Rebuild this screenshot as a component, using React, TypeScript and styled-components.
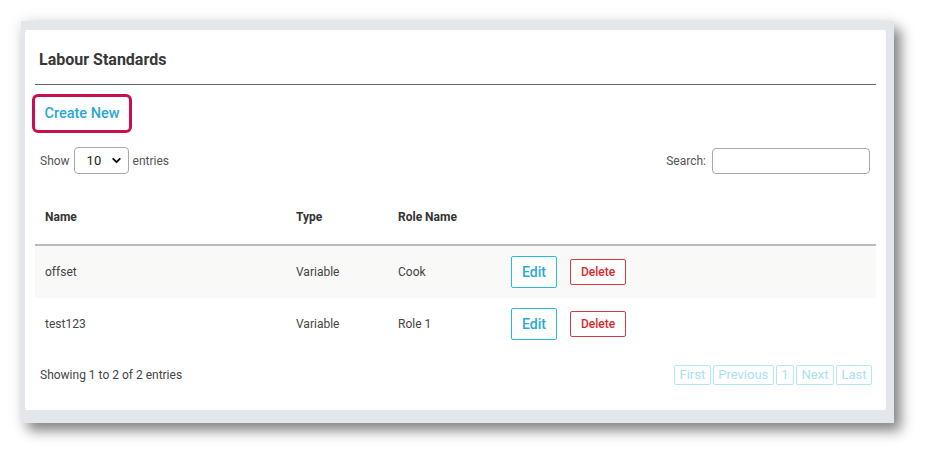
import React from 'react';
import styled, { createGlobalStyle } from 'styled-components';
import { ChevronDown } from 'lucide-react';

const rows = [
  { name: 'offset', type: 'Variable', role: 'Cook' },
  { name: 'test123', type: 'Variable', role: 'Role 1' },
];

const pages = ['First', 'Previous', '1', 'Next', 'Last'];

function App() {
  return (
    <Page>
      <GlobalStyle />
      <Frame>
        <Card>
          <Title>Labour Standards</Title>
          <CreateNew href="#">Create New</CreateNew>
          <Controls>
            <Length>
              Show
              <SelectWrap>
                <Select defaultValue="10">
                  <option value="10">10</option>
                  <option value="25">25</option>
                  <option value="50">50</option>
                </Select>
                <Chevron>
                  <ChevronDown size={13} strokeWidth={3.5} />
                </Chevron>
              </SelectWrap>
              entries
            </Length>
            <SearchLabel>
              Search:
              <SearchInput type="text" />
            </SearchLabel>
          </Controls>
          <Table>
            <thead>
              <tr>
                <Th $width={251}>Name</Th>
                <Th $width={102}>Type</Th>
                <Th $width={113}>Role Name</Th>
                <Th />
              </tr>
            </thead>
            <tbody>
              {rows.map((row, i) => (
                <Row key={row.name} $striped={i % 2 === 0}>
                  <Td>{row.name}</Td>
                  <Td>{row.type}</Td>
                  <Td>{row.role}</Td>
                  <Td>
                    <Actions>
                      <EditButton>Edit</EditButton>
                      <DeleteButton>Delete</DeleteButton>
                    </Actions>
                  </Td>
                </Row>
              ))}
            </tbody>
          </Table>
          <Footer>
            <Info>Showing 1 to 2 of 2 entries</Info>
            <Pagination>
              {pages.map((p) => (
                <PageButton key={p}>{p}</PageButton>
              ))}
            </Pagination>
          </Footer>
        </Card>
      </Frame>
    </Page>
  );
}

const GlobalStyle = createGlobalStyle`
  body {
    margin: 0;
    background: #ffffff;
    font-family: Roboto, 'Liberation Sans', sans-serif;
    color: #444;
  }
`;

const Page = styled.div`
  width: 936px;
  height: 460px;
  box-sizing: border-box;
  padding: 21px 42px 0 21px;
`;

const Frame = styled.div`
  background: #e3e7eb;
  padding: 9px 8px 13px 4px;
  box-shadow: 7px 8px 12px rgba(0, 0, 0, 0.45), 0 0 14px rgba(0, 0, 0, 0.1);
`;

const Card = styled.div`
  background: #ffffff;
  border-radius: 3px;
  padding: 0 10px 25px;
  display: flex;
  flex-direction: column;
  align-items: flex-start;
`;

const Title = styled.h2`
  align-self: stretch;
  margin: 0;
  padding: 20px 4px 14px;
  font-size: 16px;
  line-height: 20px;
  font-weight: 700;
  color: #383838;
  border-bottom: 1px solid #666;
`;

const CreateNew = styled.a`
  margin: 9px 0 0 -3px;
  width: 100px;
  height: 39px;
  box-sizing: border-box;
  border: 3px solid #c8104f;
  border-radius: 6px;
  display: flex;
  align-items: center;
  justify-content: center;
  font-size: 14.5px;
  font-weight: 500;
  color: #2aa8d6;
  text-decoration: none;
`;

const Controls = styled.div`
  align-self: stretch;
  margin-top: 14px;
  height: 27px;
  display: flex;
  justify-content: space-between;
  align-items: center;
  padding: 0 6px 0 5px;
  font-size: 12px;
  color: #555;
`;

const Length = styled.label`
  display: flex;
  align-items: center;
  gap: 4px;
`;

const SelectWrap = styled.span`
  position: relative;
  display: inline-flex;
`;

const Select = styled.select`
  appearance: none;
  width: 55px;
  height: 27px;
  border: 1px solid #aaa;
  border-radius: 4px;
  background: #fff;
  padding: 0 0 0 12px;
  font-family: Roboto, 'Liberation Sans', sans-serif;
  font-size: 13px;
  color: #222;
`;

const Chevron = styled.span`
  position: absolute;
  right: 6px;
  top: 7px;
  color: #111;
  pointer-events: none;
  display: flex;
`;

const SearchLabel = styled.label`
  display: flex;
  align-items: center;
  gap: 6px;
`;

const SearchInput = styled.input`
  width: 158px;
  height: 26px;
  box-sizing: border-box;
  border: 1px solid #aaa;
  border-radius: 4px;
`;

const Table = styled.table`
  align-self: stretch;
  margin-top: 15px;
  border-collapse: collapse;
  font-size: 12px;
`;

const Th = styled.th<{ $width?: number }>`
  width: ${({ $width }) => ($width ? `${$width}px` : 'auto')};
  height: 56px;
  padding: 0 10px;
  text-align: left;
  font-weight: 700;
  color: #333;
  border-bottom: 2px solid #bbb;
  box-sizing: border-box;
`;

const Row = styled.tr<{ $striped: boolean }>`
  background: ${({ $striped }) => ($striped ? '#f9f9f7' : '#ffffff')};
`;

const Td = styled.td`
  height: 52px;
  padding: 0 10px;
  color: #444;
`;

const Actions = styled.div`
  display: flex;
  align-items: center;
  gap: 13px;
`;

const EditButton = styled.button`
  width: 46px;
  height: 32px;
  background: #fff;
  border: 1px solid #2bb9df;
  border-radius: 2px;
  color: #2aa8d6;
  font-family: Roboto, 'Liberation Sans', sans-serif;
  font-size: 14px;
  font-weight: 500;
  padding: 0;
`;

const DeleteButton = styled.button`
  width: 56px;
  height: 26px;
  background: #fff;
  border: 1px solid #dc3545;
  border-radius: 2px;
  color: #d9272e;
  font-family: Roboto, 'Liberation Sans', sans-serif;
  font-size: 12px;
  font-weight: 500;
  padding: 0;
`;

const Footer = styled.div`
  align-self: stretch;
  margin-top: 15px;
  display: flex;
  justify-content: space-between;
  align-items: center;
  padding: 0 4px 0 5px;
`;

const Info = styled.div`
  font-size: 12px;
  color: #444;
`;

const Pagination = styled.div`
  display: flex;
  gap: 2px;
`;

const PageButton = styled.span`
  height: 20px;
  box-sizing: border-box;
  padding: 0 4.5px;
  border: 1px solid #b5e6f6;
  border-radius: 2px;
  color: #abe0f2;
  font-size: 13px;
  line-height: 18px;
`;

export default App;
